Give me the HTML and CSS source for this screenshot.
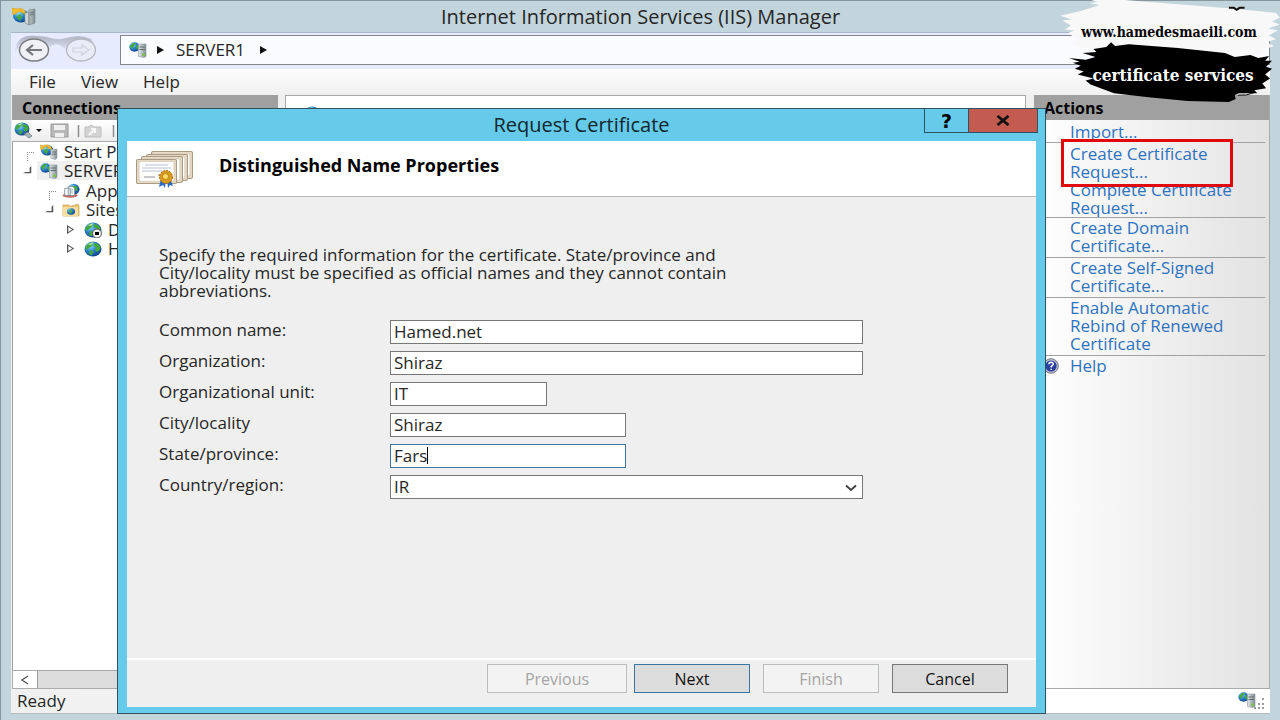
FILE: index.html
```html
<!DOCTYPE html>
<html lang="en">
<head>
<meta charset="utf-8">
<title>Internet Information Services (IIS) Manager</title>
<link rel="stylesheet" href="styles.css">
</head>
<body>
<svg class="defs" aria-hidden="true">
  <defs>
    <radialGradient id="sea" cx="35%" cy="30%" r="80%"><stop offset="0" stop-color="#8fdcf5"/><stop offset=".45" stop-color="#2b84d0"/><stop offset="1" stop-color="#0b3580"/></radialGradient>
    <linearGradient id="metal" x1="0" x2="1"><stop offset="0" stop-color="#e4e9ea"/><stop offset="1" stop-color="#7f8d92"/></linearGradient>
    <linearGradient id="arc" x1="0" x2="0" y1="0" y2="1"><stop offset="0" stop-color="#aeb4c2"/><stop offset="1" stop-color="#e6ebfc"/></linearGradient>
    <symbol id="globe" viewBox="0 0 18 16">
      <ellipse cx="9" cy="8" rx="8.5" ry="7.5" fill="url(#sea)"/>
      <path d="M3 4 6 1.5 9 2 8 5 5 7 3 9 1 7ZM10 2 14 3 16.5 6 16 9 13 11 11 9 12 6 9.500 5ZM6 9 9 10 9.500 12 7 14.500 5 13Z" fill="#45a83c"/>
      <path d="M4 3.500Q7 1 10 1.500L7 4Z" fill="#cdf2b8" opacity=".8"/>
    </symbol>
    <symbol id="server" viewBox="0 0 18 16">
      <ellipse cx="5.500" cy="5" rx="5.200" ry="4.700" fill="url(#sea)"/>
      <path d="M1 4 4 1 7 1 5 4 3 7ZM7 4 9 3 10 6 8 8Z" fill="#45a83c"/>
      <path d="M9.500 2 17 2V14.500L15 15.500 9.500 14.500Z" fill="url(#metal)" stroke="#8b989d" stroke-width=".6"/>
      <path d="M10.500 5H16M10.500 7.500H16" stroke="#5f6b70"/><path d="M13 11.500H16V14H13Z" fill="#7cc04f"/>
    </symbol>
    <symbol id="start" viewBox="0 0 20 18">
      <ellipse cx="8" cy="7" rx="7" ry="6" fill="url(#sea)"/>
      <path d="M4 8 7 5 9 8 7 12ZM9 3 13 5 12 8Z" fill="#45a83c"/>
      <path d="M0 1 4 2Q8-1 12 3L13 6 8 5 9 3Q6 2 4 5L1 7Z" fill="#f3bb2c" stroke="#d09c22" stroke-width=".5"/>
      <path d="M12 6 19 6V16L17 17.500 12 16Z" fill="url(#metal)" stroke="#8b989d" stroke-width=".6"/>
      <path d="M13 9H18M13 11.500H18" stroke="#5f6b70"/>
    </symbol>
    <symbol id="pools" viewBox="0 0 20 16">
      <ellipse cx="13" cy="6" rx="6.500" ry="6" fill="url(#sea)"/><path d="M12 2 17 3 17 8 13 7Z" fill="#45a83c"/>
      <ellipse cx="9" cy="13" rx="8.500" ry="2.500" fill="#c96a6b"/>
      <path d="M3 5H9V13H3ZM7 3H12L14 5V13H7Z" fill="#f7f9fa" stroke="#728085" stroke-width=".8"/>
      <path d="M9 6H12M9 8H12M9 10H12" stroke="#7aa6c5" stroke-width=".8"/>
    </symbol>
    <symbol id="folder" viewBox="0 0 18 14">
      <path d="M1 2H7L8 3.500 16 1 17 3V13H1Z" fill="#e9c472" stroke="#c9a252" stroke-width=".7"/><path d="M1 4H16V13H1Z" fill="#f8dfa0"/>
      <ellipse cx="9" cy="8.500" rx="4" ry="3.300" fill="url(#sea)"/><path d="M7 7 10 6 10 9 8 11Z" fill="#45a83c"/>
    </symbol>
    <symbol id="cert" viewBox="0 0 40 27" preserveAspectRatio="none">
      <rect width="39" height="26" x=".5" y=".5" rx="1.500" fill="#e6dac5" stroke="#a99a83"/>
      <rect x="3" y="3" width="34" height="21" fill="#fdfdfc" stroke="#cfc3ad" stroke-width=".6"/>
    </symbol>
  </defs>
</svg>

<div class="window">
  <header class="titlebar">
    <svg class="app-icon" viewBox="0 0 24 19" aria-hidden="true">
      <ellipse cx="9" cy="9" rx="8" ry="6.500" fill="url(#sea)"/><path d="M4 10 8 7 10 10 8 14ZM10 4 14 6 12 9Z" fill="#45a83c"/>
      <path d="M0 1 5 2Q10 0 13 4L13 7 9 5Q6 4 5 6L1 8Z" fill="#f3bb2c" stroke="#d09c22" stroke-width=".5"/>
      <path d="M13 6 17 5V18L13 16ZM17 3 23 2V16L17 18Z" fill="url(#metal)" stroke="#7f8a8e" stroke-width=".7"/><path d="M18 6 22 5M18 8 22 7" stroke="#556065" stroke-width=".7"/>
    </svg>
    <h1>Internet Information Services (IIS) Manager</h1>
  </header>

  <div class="frame">
    <nav class="address-row" aria-label="Address">
      <div class="history">
        <svg class="history-art" viewBox="0 2 84 30" aria-hidden="true">
          <path d="M1 20C2 5 10 2 22 3C35 3 39 7 48 6C57 4 65 1 77 6L80 11C72 5 57 5 51 16C45 10 40 10 36 14C30 4 13 3 5 13Z" fill="url(#arc)"/>
          <ellipse cx="20" cy="17" rx="14.500" ry="11" fill="#eff1f7" stroke="#7b7d81" stroke-width="1.500"/>
          <path d="M28 17H13M19 12 13 17 19 22" fill="none" stroke="#77787b" stroke-width="2.200"/>
          <ellipse cx="67" cy="17" rx="14.500" ry="11" fill="#e8ecf8" stroke="#b4b7be" stroke-width="1.300"/>
          <path d="M59 15H68V12L75 17 68 22V19H59Z" fill="none" stroke="#d0d3db" stroke-width="1.200"/>
        </svg>
      </div>
      <div class="address">
        <svg class="icon" aria-hidden="true"><use href="#server"/></svg>
        <span class="arrow"></span><span>SERVER1</span><span class="arrow"></span>
      </div>
    </nav>
    <nav class="menu" aria-label="Menu">
      <button type="button">File</button><button type="button">View</button><button type="button">Help</button>
    </nav>

    <div class="workspace">
      <aside class="connections">
        <h2>Connections</h2>
        <div class="toolbar">
          <svg viewBox="0 0 104 18" aria-hidden="true">
            <use href="#globe" x="2" y="0" width="16" height="14"/><path d="M12 12 16 10 20 14 17 16Z" fill="#a9b7b9" stroke="#66777b" stroke-width=".7"/>
            <path d="M24 7H30L27 10Z" fill="#111"/>
            <path d="M39 2H56V15H39Z" fill="#b8b8b8" stroke="#989898"/><path d="M42 3H53V8H42ZM43 11H52V15H43Z" fill="#efefef"/>
            <path d="M66.500 3V15M101.500 3V15" stroke="#8e8e8e" stroke-width="1.500"/>
            <path d="M73 5H77L79 3 82 5H89V15H73Z" fill="#d3d3d3" stroke="#bcbcbc"/><path d="M77 13 82 8M79 7H83V11" fill="none" stroke="#f7f7f7" stroke-width="2"/>
          </svg>
        </div>
        <div class="tree">
          <ul>
            <li><div class="node"><span class="lead elbow"></span><svg class="icon" aria-hidden="true"><use href="#start"/></svg><span>Start Page</span></div></li>
            <li><div class="node selected"><span class="lead open"></span><svg class="icon" aria-hidden="true"><use href="#server"/></svg><span>SERVER1</span></div>
              <ul>
                <li><div class="node"><span class="lead elbow"></span><svg class="icon" aria-hidden="true"><use href="#pools"/></svg><span>Application</span></div></li>
                <li><div class="node"><span class="lead open"></span><svg class="icon" aria-hidden="true"><use href="#folder"/></svg><span>Sites</span></div>
                  <ul>
                    <li><div class="node"><span class="lead closed"></span><svg class="icon" viewBox="0 0 18 16" aria-hidden="true"><use href="#globe" width="18" height="16"/><circle cx="13" cy="11.500" r="4.500" fill="#eee" stroke="#555"/><path d="M11 10H15V13H11Z"/></svg><span>Default</span></div></li>
                    <li><div class="node"><span class="lead closed"></span><svg class="icon" aria-hidden="true"><use href="#globe"/></svg><span>Hamed</span></div></li>
                  </ul>
                </li>
              </ul>
            </li>
          </ul>
        </div>
        <div class="scroll"><button type="button" aria-label="Scroll left"><svg viewBox="0 0 10 10" aria-hidden="true"><path d="M8 1 2 5 8 9" fill="none" stroke="#555" stroke-width="1.300"/></svg></button><span></span></div>
      </aside>

      <main class="content">
        <svg class="icon" aria-hidden="true"><use href="#globe"/></svg>
      </main>

      <aside class="actions">
        <h2>Actions</h2>
        <ul>
          <li><a href="#import">Import...</a></li>
          <li class="divided marked"><a href="#create">Create Certificate<br>Request...</a></li>
          <li class="joined"><a href="#complete">Complete Certificate<br>Request...</a></li>
          <li class="divided"><a href="#domain">Create Domain<br>Certificate...</a></li>
          <li class="divided"><a href="#self">Create Self-Signed<br>Certificate...</a></li>
          <li class="divided"><a href="#rebind">Enable Automatic<br>Rebind of Renewed<br>Certificate</a></li>
          <li class="divided help">
            <svg viewBox="0 0 16 16" aria-hidden="true"><circle cx="8" cy="8" r="7.300" fill="#b9bdc9" stroke="#777c8a"/><circle cx="8" cy="8" r="5.600" fill="#2a3f9e"/><path d="M5.800 6.300Q6 4.300 8.200 4.300 10.500 4.500 10.200 6.400 10 7.200 8.200 8.300V9.500M8.200 10.800V12" fill="none" stroke="#fff" stroke-width="1.500"/></svg>
            <a href="#help">Help</a></li>
        </ul>
      </aside>
    </div>

    <footer class="status">
      <span>Ready</span>
      <svg viewBox="0 0 30 20" aria-hidden="true"><use href="#server" x="0" y="1" width="18" height="16"/><path d="M24 7H26V9H24ZM20 12H22V14H20ZM24 12H26V14H24ZM16 16H18V18H16ZM20 16H22V18H20ZM24 16H26V18H24Z" fill="#9a9a9a"/></svg>
    </footer>
  </div>
</div>

<section class="dialog" role="dialog" aria-labelledby="dialog-title">
  <header class="dialog-bar">
    <h2 id="dialog-title">Request Certificate</h2>
    <div class="controls">
      <button type="button" class="ask" aria-label="Help">?</button>
      <button type="button" class="close" aria-label="Close"><svg viewBox="0 0 16 12" aria-hidden="true"><path d="M2 1 14 11M14 1 2 11" stroke="#111" stroke-width="3"/></svg></button>
    </div>
  </header>
  <form class="dialog-body">
    <div class="banner">
      <svg viewBox="0 0 58 38" aria-hidden="true">
        <use href="#cert" x="15" y="1" width="42" height="28"/><use href="#cert" x="10" y="4" width="42" height="27"/><use href="#cert" x="5" y="6" width="42" height="27"/><use href="#cert" x="0" y="9" width="41" height="25"/>
        <path d="M9 15H32M6 18H35M6 21H27" stroke="#aaaed2" stroke-width=".8"/><path d="M8 27H19M22 25H25" stroke="#777" stroke-width=".8"/>
        <path d="M25 29 23 37 27 35 29 38 30 29ZM31 29 32 38 34 35 37 36 34 28Z" fill="#286bc2"/>
        <circle cx="30" cy="27" r="6.500" fill="#d89a1d" stroke="#a66b08" stroke-dasharray="2 1"/><circle cx="29.500" cy="26.500" r="3" fill="#ffdb64" stroke="#a66b08" stroke-width=".7"/>
      </svg>
      <h3>Distinguished Name Properties</h3>
    </div>
    <div class="form">
      <p>Specify the required information for the certificate. State/province and<br>City/locality must be specified as official names and they cannot contain<br>abbreviations.</p>
      <div class="fields">
        <label for="cn">Common name:</label><input id="cn" type="text" value="Hamed.net">
        <label for="org">Organization:</label><input id="org" type="text" value="Shiraz">
        <label for="unit">Organizational unit:</label><input id="unit" class="short" type="text" value="IT">
        <label for="city">City/locality</label><input id="city" class="medium" type="text" value="Shiraz">
        <label for="state">State/province:</label><div class="box medium"><input id="state" class="active" type="text" value="Fars"><span class="caret"></span></div>
        <label for="country">Country/region:</label><div class="box"><select id="country"><option>IR</option></select><svg class="chevron" viewBox="0 0 12 8" aria-hidden="true"><path d="M1 1.500 6 6 11 1.500" fill="none" stroke="#444" stroke-width="2"/></svg></div>
      </div>
    </div>
    <div class="buttons">
      <button type="button" class="wide" disabled>Previous</button>
      <button type="button" class="default">Next</button>
      <button type="button" disabled>Finish</button>
      <button type="button" class="last">Cancel</button>
    </div>
  </form>
</section>

<div class="badge">
  <svg viewBox="0 0 224 106" aria-hidden="true">
    <path d="M22 11 40 5 30 3 38 2 32 0H66L78 1 130 5 178 9 220 13 224 18 216 22 224 25 212 29 222 31 213 36 220 40 210 43 218 47 206 51 209 54 190 57 60 49 20 49 10 44 18 40 8 34 14 31 5 30 11 26 2 21 12 20 0 16Z" fill="#f8f8f8"/>
    <path d="M172 8H177L180 10 183 8H188" fill="none" stroke="#111" stroke-width="2"/>
    <path d="M9 59 26 61 36 58 23 54 37 53 34 50 47 48 52 43 56 47 70 45 120 49 168 54 178 58 194 56 202 59 213 57 209 62 216 62 210 68 216 70 209 76 214 80 206 85 210 90 198 92 201 95 182 95 178 97 179 101 172 104 130 103 90 99 55 95 31 86 26 82 34 80 18 76 24 73 15 70 21 67 13 64 20 63Z"/>
    <path d="M181 97Q190 98 199 94" fill="none" stroke="#000"/>
  </svg>
  <div class="badge-text"><span>www.hamedesmaeili.com</span><span class="light">certificate services</span></div>
</div>
</body>
</html>
```
FILE: styles.css
```css
* { box-sizing: border-box; }
body {
  margin: 0;
  position: relative;
  min-height: 100vh;
  overflow: hidden;
  font: 17px/18px "Open Sans", "Noto Sans", sans-serif;
  color: #262626;
}
h1, h2, h3, p, ul { margin: 0; padding: 0; font-weight: 400; }
ul { list-style: none; }
button, input, select { font: inherit; color: inherit; border-radius: 0; }
svg { display: block; flex: none; }
.defs { position: absolute; width: 0; height: 0; }
.icon { width: 18px; height: 16px; }

.window {
  min-height: 100vh;
  display: flex;
  flex-direction: column;
  padding: 0 10px 6px;
  background: #c2d5dc;
  border-left: 1px solid #87969c;
  border-top: 1px solid #87969c;
}
.titlebar { height: 31px; display: flex; align-items: center; }
.titlebar h1 { flex: 1; text-align: center; font-size: 20px; padding: 0 25px 0 0; }
.app-icon { width: 24px; height: 19px; margin-left: 1px; }
.frame { flex: 1; display: flex; flex-direction: column; background: #f0f0f0; border-top: 1px solid #a9b7c6; }

.address-row { height: 36px; display: flex; align-items: flex-start; padding-top: 2px; background: #e6ecfd; }
.history { width: 109px; padding-left: 3px; }
.history-art { width: 84px; height: 30px; }
.address {
  flex: 1;
  height: 30px;
  display: flex;
  align-items: center;
  gap: 10px;
  padding-left: 8px;
  background: #f9fbff;
  border: 1px solid #84868e;
}
.arrow { border: solid transparent; border-width: 4px 0 4px 7px; border-left-color: #111; margin: 0 2px 0 0; }
.address .arrow:last-child { margin-left: 5px; }
.menu { height: 26px; display: flex; align-items: center; gap: 25px; padding-left: 18px; background: linear-gradient(#fcfcfc, #f0f0f0); }
.menu button { border: 0; padding: 0; background: none; }

.workspace { flex: 1; display: flex; padding-left: 1px; }
.workspace h2 { height: 25px; line-height: 26px; padding-left: 10px; background: #a0a0a0; font-weight: 700; font-size: 16px; color: #000; }
.connections { width: 266px; display: flex; flex-direction: column; }
.toolbar { height: 22px; padding-top: 2px; background: linear-gradient(#fff, #ececec); border-bottom: 1px solid #aaa; }
.toolbar svg { width: 104px; height: 18px; }
.tree { flex: 1; padding: 0 0 0 10px; background: #fff; border-left: 1px solid #a0a0a0; }
.node { height: 19px; display: flex; align-items: center; gap: 6px; white-space: nowrap; }
.tree ul ul { padding: 1px 0 0 22px; }
.selected { background: linear-gradient(90deg, transparent 14px, #f0f0f0 14px); }
.lead { width: 11px; height: 9px; flex: none; }
.elbow { border-left: 1px dotted #888; border-top: 1px dotted #888; margin: 9px 0 0 4px; width: 7px; }
.open { background: #555; clip-path: polygon(0 80%, 75% 80%, 75% 0, 60% 20%, 60% 66%, 24% 66%); }
.closed { background: #555; clip-path: polygon(0 0, 65% 50%, 0 100%, 0 0, 12% 22%, 12% 78%, 48% 50%, 12% 22%); }
.scroll { height: 19px; display: flex; border: 1px solid #aaa; background: #dcdcdc; }
.scroll button { width: 25px; padding: 0 7px; background: #fff; border: 0; border-right: 1px solid #999; }
.scroll svg { width: 10px; height: 10px; }

.content { flex: 1; margin: 0 8px 0 7px; padding: 10px 0 0 17px; background: #fff; border: 1px solid #a8a8a8; }
.actions { width: 236px; display: flex; flex-direction: column; background: linear-gradient(90deg, #fff, #e2e2e2); border-right: 1px solid #aaa; border-bottom: 1px solid #aaa; }
.actions ul { padding: 3px 4px 0 12px; }
.actions li { position: relative; padding: 1px 0 2px 24px; line-height: 18px; white-space: nowrap; }
.actions li:first-child { padding: 0 0 1px 24px; }
.actions .divided { padding-top: 1px; border-top: 1px solid #a2a2a2; }
.actions .divided.marked { padding: 2px 0 0 24px; }
.actions li.joined { padding: 0 0 0 24px; }
.actions a { color: #2f72be; text-decoration: none; }
.marked::before {
  content: "";
  position: absolute;
  z-index: 1;
  inset: -4px 32px -6px 15px;
  border: 3px solid #e10a0a;
  background: linear-gradient(90deg, #fafafa, #e9e9e9);
}
.marked a { position: relative; z-index: 2; }
.help svg { position: absolute; left: -3px; top: 2px; width: 16px; height: 16px; }

.status { height: 25px; display: flex; align-items: center; justify-content: space-between; padding: 0 2px 0 6px; background: linear-gradient(90deg, #f0f0f0, #fff 80%); border-bottom: 1px solid #b5babd; }
.status svg { width: 30px; height: 20px; }

.dialog {
  position: absolute;
  inset: 108px 234px 6px 117px;
  display: flex;
  flex-direction: column;
  padding: 0 9px 6px;
  background: #66caea;
  border: 1px solid #32515d;
}
.dialog-bar { height: 32px; display: flex; align-items: flex-start; position: relative; }
.dialog-bar h2 { flex: 1; text-align: center; font-size: 20px; line-height: 32px; color: #12262e; }
.controls { position: absolute; right: -2px; top: -1px; display: flex; }
.controls button { height: 25px; padding: 0; border: 1px solid #2c5361; display: grid; place-items: center; background: #66caea; color: #000; }
.controls .ask { width: 44px; border-right: 0; font: 700 19px/20px "DejaVu Sans", sans-serif; }
.controls .close { width: 70px; background: #c35b51; }
.close svg { width: 16px; height: 11px; }
.dialog-body { flex: 1; display: flex; flex-direction: column; background: #efefef; }
.banner { height: 56px; display: flex; align-items: center; gap: 25px; padding-left: 9px; background: #fff; border-bottom: 1px solid #b8b8b8; }
.banner svg { width: 58px; height: 38px; }
.banner h3 { font-size: 18px; font-weight: 700; color: #000; padding-bottom: 8px; }
.form { flex: 1; padding: 49px 173px 0 32px; }
.form p { white-space: nowrap; }
.fields { display: grid; grid-template-columns: 231px 1fr; grid-auto-rows: 24px; row-gap: 7px; margin-top: 20px; }
.fields label { line-height: 20px; }
.fields input, .fields select {
  width: 100%;
  height: 24px;
  padding: 0 3px 1px;
  border: 1px solid #777;
  background: #fff;
  appearance: none;
  outline: 0;
}
.fields .short { width: 157px; }
.fields .medium { width: 236px; }
.fields .active { border-color: #3d759f; }
.box { position: relative; }
.caret { position: absolute; left: 37px; top: 3px; width: 1px; height: 17px; background: #000; }
.chevron { position: absolute; right: 6px; top: 9px; width: 12px; height: 8px; pointer-events: none; }
.buttons { display: flex; justify-content: flex-end; gap: 13px; padding: 4px 28px 14px; border-top: 2px solid #fff; }
.buttons button { width: 116px; height: 29px; padding: 0; font-size: 16px; background: #dcdcdc; border: 1px solid #777; color: #111; }
.buttons .wide { width: 140px; margin-right: -6px; }
.buttons .default { border-color: #39759f; }
.buttons button:disabled { background: #f3f3f3; border-color: #b9bdbd; color: #a5a5a5; }

.badge { position: absolute; top: 0; right: 0; width: 220px; }
.badge svg { width: 220px; height: 104px; }
.badge-text {
  position: absolute;
  inset: 20px 0 auto 0;
  display: grid;
  gap: 19px;
  justify-items: center;
  padding-right: 2px;
  font: 700 14px/24px "DejaVu Serif Condensed", "DejaVu Serif", serif;
  color: #050505;
}
.badge .light { color: #fff; padding-left: 8px; font-size: 17px; }
```
